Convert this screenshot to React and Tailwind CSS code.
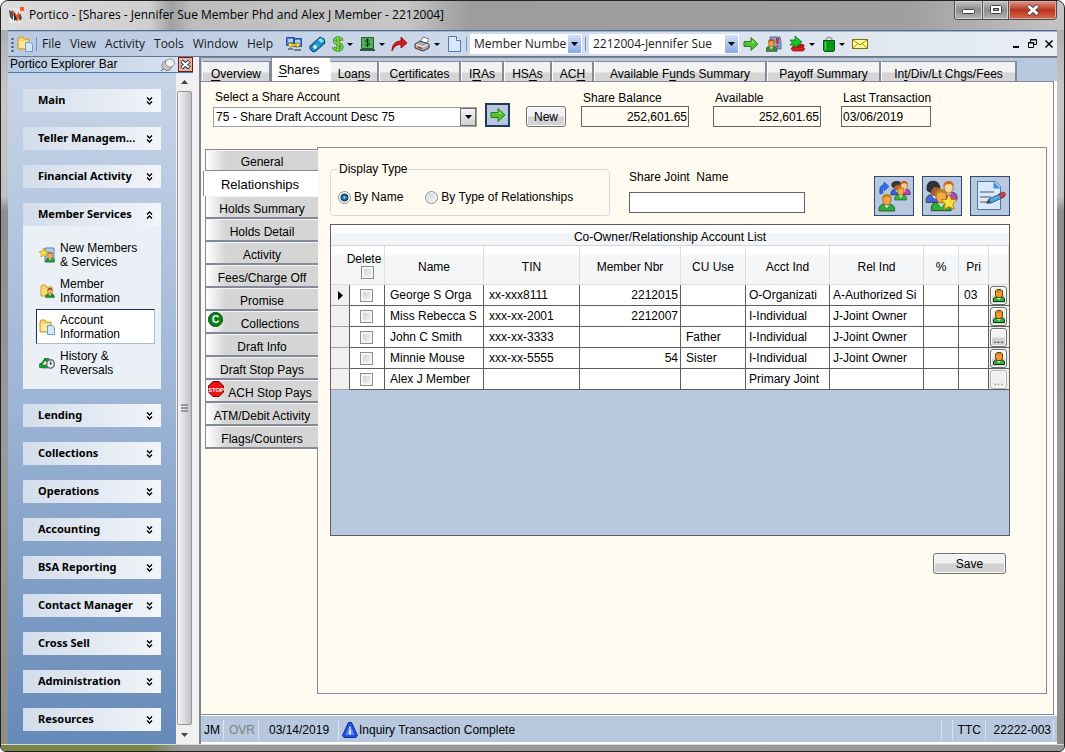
import { useState } from "react";

const MENUS = ["File", "View", "Activity", "Tools", "Window", "Help"];

const TABS = [
  { pre: "", key: "O", post: "verview", width: "w-[69px]" },
  { pre: "", key: "S", post: "hares", width: "w-[59px]" },
  { pre: "Loa", key: "n", post: "s", width: "w-[49px]" },
  { pre: "C", key: "e", post: "rtificates", width: "w-[82px]" },
  { pre: "I", key: "R", post: "As", width: "w-[43px]" },
  { pre: "HS", key: "A", post: "s", width: "w-[48px]" },
  { pre: "AC", key: "H", post: "", width: "w-[42px]" },
  { pre: "Available F", key: "u", post: "nds Summary", width: "w-[173px]" },
  { pre: "Pa", key: "y", post: "off Summary", width: "w-[114px]" },
  { pre: "In", key: "t", post: "/Div/Lt Chgs/Fees", width: "w-[136px]" },
];

const SIDE_TABS = [
  "General",
  "Relationships",
  "Holds Summary",
  "Holds Detail",
  "Activity",
  "Fees/Charge Off",
  "Promise",
  "Collections",
  "Draft Info",
  "Draft Stop Pays",
  "ACH Stop Pays",
  "ATM/Debit Activity",
  "Flags/Counters",
];

const GROUPS = [
  "Main",
  "Teller Managem...",
  "Financial Activity",
  "Member Services",
  "Lending",
  "Collections",
  "Operations",
  "Accounting",
  "BSA Reporting",
  "Contact Manager",
  "Cross Sell",
  "Administration",
  "Resources",
];

const SERVICES = [
  { lines: ["New Members", "& Services"], icon: NewMemberIcon },
  { lines: ["Member", "Information"], icon: MemberFolderIcon },
  { lines: ["Account", "Information"], icon: FolderIcon },
  { lines: ["History &", "Reversals"], icon: HistoryIcon },
];

const COLUMNS = [
  { label: "Name", width: "w-[99px]" },
  { label: "TIN", width: "w-[96px]" },
  { label: "Member Nbr", width: "w-[101px]" },
  { label: "CU Use", width: "w-[65px]" },
  { label: "Acct Ind", width: "w-[84px]" },
  { label: "Rel Ind", width: "w-[94px]" },
  { label: "%", width: "w-[35px]" },
  { label: "Pri", width: "w-[30px]" },
];

const ROWS = [
  { name: "George S Orga", tin: "xx-xxx8111", nbr: "2212015", use: "", acct: "O-Organizati", rel: "A-Authorized Si", pri: "03", action: "person" },
  { name: "Miss Rebecca S", tin: "xxx-xx-2001", nbr: "2212007", use: "", acct: "I-Individual", rel: "J-Joint Owner", pri: "", action: "person" },
  { name: "John C Smith", tin: "xxx-xx-3333", nbr: "", use: "Father", acct: "I-Individual", rel: "J-Joint Owner", pri: "", action: "more" },
  { name: "Minnie Mouse", tin: "xxx-xx-5555", nbr: "54", use: "Sister", acct: "I-Individual", rel: "J-Joint Owner", pri: "", action: "person" },
  { name: "Alex J Member", tin: "", nbr: "", use: "", acct: "Primary Joint", rel: "", pri: "", action: "disabled" },
];

export default function App() {
  return (
    <div className="flex min-h-screen flex-col overflow-hidden rounded-t-lg rounded-b-md border border-[#222] bg-[linear-gradient(to_bottom,#a3a3a3_0,#c9c6c6_12%,#c4c0c0_26%,#8d8d8d_28%,#9b9b9b_60%,#8f8d88_100%)] px-[7px] font-['Liberation_Sans',Arial,sans-serif] text-xs text-black">
      <TitleBar />
      <div className="flex flex-1 flex-col border-t border-[#5e6a78] bg-white">
        <Toolbar />
        <div className="flex flex-1">
          <ExplorerBar />
          <Workspace />
        </div>
      </div>
      <div className="-mx-[7px] h-[7px] border-t border-[#d8d8d8] bg-linear-to-r from-[#7c8548] from-14% to-[#98989a] to-17%" />
    </div>
  );
}

function TitleBar() {
  return (
    <header className="-mx-[7px] flex h-[29px] items-start bg-[linear-gradient(to_right,#dcdcdc_0,#cfcfcf_14%,#a0a0a0_16%,#bdbdbd_18%,#c6c6c6_38%,#9d9d9d_44%,#9f9f9f_85%,#c4c4c4_100%)] px-[7px]">
      <PorticoLogo />
      <h1 className="ml-1 flex-1 pt-[5px] font-['Open_Sans','Segoe_UI',sans-serif] text-xs leading-[17px] whitespace-nowrap">
        Portico - [Shares - Jennifer Sue Member Phd and Alex J Member - 2212004]
      </h1>
      <div className="flex h-[19px] overflow-hidden rounded-b border border-t-0 border-[#4d4d4d]">
        <button aria-label="Minimize" className="flex w-7 items-center justify-center border-r border-[#555] bg-linear-to-b from-[#c5c5c5] via-[#8c8c8c] to-[#b5b5b5] pt-1 inset-shadow-[0_0_0_1px_#d2d2d2]">
          <svg width="13" height="6"><rect x=".5" y=".5" width="12" height="4" rx="1" fill="#fff" stroke="#444" /></svg>
        </button>
        <button aria-label="Maximize" className="flex w-[26px] items-center justify-center border-r border-[#555] bg-linear-to-b from-[#c5c5c5] via-[#8c8c8c] to-[#b5b5b5] inset-shadow-[0_0_0_1px_#d2d2d2]">
          <svg width="12" height="10">
            <rect x=".5" y=".5" width="11" height="8" rx="1" fill="#fff" stroke="#444" />
            <rect x="3.5" y="3.5" width="5" height="2" fill="#999" stroke="#444" />
          </svg>
        </button>
        <button aria-label="Close" className="flex w-[47px] items-center justify-center bg-linear-to-b from-[#dd9a8b] via-[#b9311c] to-[#d4694f] inset-shadow-[0_0_0_1px_#e5a598]">
          <svg width="14" height="12" viewBox="0 0 14 12">
            <path d="M2 1.500l10 9M12 1.500l-10 9" stroke="#5c4a4a" strokeWidth="4.600" />
            <path d="M2.500 2l9 8M11.500 2l-9 8" stroke="#fff" strokeWidth="2.800" />
          </svg>
        </button>
      </div>
    </header>
  );
}

function Toolbar() {
  return (
    <div className="flex h-[26px] items-center border-t border-b border-t-[#8fb6e4] border-b-[#6c7582] bg-linear-to-r from-[#b9c9e1] to-[#e9eef4] font-['Open_Sans','Segoe_UI',sans-serif] text-[#1b1b1b]">
      <svg className="ml-[3px]" width="4" height="17"><path d="M1.5 2v15" stroke="#3d4f70" strokeWidth="2" strokeDasharray="2 2" /></svg>
      <span className="ml-0.5"><FolderIcon /></span>
      <Divider />
      <nav className="ml-0.5 flex w-[231px] justify-between">
        {MENUS.map((menu) => (
          <button key={menu} className="leading-4">{menu}</button>
        ))}
      </nav>
      <div className="ml-3 flex items-center gap-1.5">
        <IconButton label="Terminals"><TerminalsIcon /></IconButton>
        <IconButton label="Scanner"><ScannerIcon /></IconButton>
        <IconButton label="Cash" menu><DollarIcon /></IconButton>
        <IconButton label="Drawer" menu><DrawerIcon /></IconButton>
        <IconButton label="Forward"><RedArrowIcon /></IconButton>
        <IconButton label="Print" menu><PrinterIcon /></IconButton>
        <IconButton label="New page"><PageIcon /></IconButton>
      </div>
      <Divider />
      <ToolbarSelect label="Search by" value="Member Numbe" width="w-28" />
      <Divider />
      <ToolbarSelect label="Member" value="2212004-Jennifer Sue" width="w-[150px]" />
      <div className="ml-1 flex items-center gap-[7px]">
        <IconButton label="Go"><GreenArrow size={16} /></IconButton>
        <IconButton label="Alerts"><AlertPersonIcon /></IconButton>
        <IconButton label="Transfer" menu><TransferIcon /></IconButton>
        <IconButton label="Bag" menu><BagIcon /></IconButton>
        <IconButton label="Mail"><MailIcon /></IconButton>
      </div>
      <div className="mr-[3px] ml-auto flex items-center gap-1.5">
        <button aria-label="Minimize document">
          <svg width="10" height="10"><path d="M1 8h6" stroke="#000" strokeWidth="2" /></svg>
        </button>
        <button aria-label="Restore document">
          <svg width="10" height="10" fill="none" stroke="#000">
            <path d="M2.5 3V.5h6v5H6M2 1h7M.5 4h6" />
            <path d="M.5 3.5h5v5h-5z" />
          </svg>
        </button>
        <button aria-label="Close document">
          <svg width="10" height="10"><path d="M1.5 1.5l7 7M8.5 1.5l-7 7" stroke="#000" strokeWidth="1.5" /></svg>
        </button>
      </div>
    </div>
  );
}

function Divider() {
  return <span className="mx-[3px] h-3.5 w-px bg-[#6f93c8]" />;
}

function IconButton({ label, menu, children }) {
  return (
    <button aria-label={label} className="flex items-center gap-0.5">
      {children}
      {menu && <SmallCaret />}
    </button>
  );
}

function Caret() {
  return <svg width="7" height="4"><path d="M0 0h7L3.500 4z" fill="#000" /></svg>;
}

function SmallCaret() {
  return <svg width="7" height="3"><path d="M1 0h6L4 3z" fill="#000" /></svg>;
}

function ToolbarSelect({ label, value, width }) {
  return (
    <div className={`relative h-5 bg-white ${width}`}>
      <select aria-label={label} className="h-full w-full appearance-none pr-4 pl-1 leading-4">
        <option>{value}</option>
      </select>
      <span className="pointer-events-none absolute inset-y-px right-px flex w-[13px] items-center justify-center bg-linear-to-b from-[#d4e1f6] to-[#86aae4]">
        <Caret />
      </span>
    </div>
  );
}

function ExplorerBar() {
  return (
    <aside className="flex w-[185px] flex-col">
      <div className="flex h-4 items-center justify-between border-b border-[#4a78b5] bg-linear-to-r from-[#b5c8e0] to-[#dbe5f0] pl-0.5">
        <span className="leading-[15px]">Portico Explorer Bar</span>
        <span className="flex items-center gap-0.5">
          <button aria-label="Pin"><PinIcon /></button>
          <button aria-label="Close explorer" className="border border-[#6b1c1c] bg-[#e5b3aa] p-px">
            <svg width="11" height="11" viewBox="0 0 11 11">
              <path d="M1.500 2l8 7M9.500 2l-8 7" stroke="#333" strokeWidth="4" />
              <path d="M2 2.500l7 6M9 2.500l-7 6" stroke="#fff" strokeWidth="2" />
            </svg>
          </button>
        </span>
      </div>
      <div className="flex flex-1">
        <div className="flex flex-1 flex-col gap-[15px] bg-linear-to-b from-[#c8d5e8] via-[#9cb4d5] to-[#668ab8] px-[15px] pt-4">
          {GROUPS.map((group) => (
            <ExplorerGroup key={group} title={group} open={group === "Member Services"} />
          ))}
        </div>
        <div className="flex w-[17px] flex-col items-center bg-[#f0f0f0]">
          <button aria-label="Scroll up" className="flex h-[18px] items-center"><svg width="7" height="4"><path d="M0 4h7L3.500 0z" fill="#444" /></svg></button>
          <div className="flex w-[15px] flex-1 items-center justify-center rounded-xs border border-[#979797] bg-linear-to-r from-[#f5f5f5] via-[#dcdcdf] to-[#bfc0c4]">
            <svg width="7" height="8"><path d="M0 1h7M0 4h7M0 7h7" stroke="#555" /></svg>
          </div>
          <button aria-label="Scroll down" className="flex h-[19px] items-center"><svg width="7" height="4"><path d="M0 0h7L3.500 4z" fill="#444" /></svg></button>
        </div>
      </div>
    </aside>
  );
}

function ExplorerGroup({ title, open }) {
  return (
    <section>
      <button className="flex h-[23px] w-full items-center justify-between bg-linear-to-r from-[#d3ddeb] to-[#f2f5f9] pr-2 pl-[15px] font-['Noto_Sans',Tahoma,sans-serif] text-[11px] font-bold whitespace-nowrap">
        {title}
        <svg width="7" height="8" fill="none" stroke="#000" strokeWidth="1.400">
          <path d={open ? "M1 3.500l2.500-2.500 2.500 2.500M1 7.500l2.500-2.500 2.500 2.500" : "M1 .5l2.500 2.500 2.500-2.500M1 4.500l2.500 2.500 2.500-2.500"} />
        </svg>
      </button>
      {open && (
        <div className="flex flex-col gap-px bg-[#eaf0f5] pt-[11px] pr-1.5 pb-[9px] pl-[13px]">
          {SERVICES.map(({ lines, icon: Icon }) => (
            <a
              key={lines[0]}
              href="#"
              className={`flex h-[35px] items-center gap-[5px] border pl-0.5 leading-3.5 ${
                lines[0] === "Account" ? "border-t-[#1f2f4a] border-r-[#a9bcd6] border-b-[#a9bcd6] border-l-[#1f2f4a] bg-white" : "border-transparent"
              }`}
            >
              <Icon />
              <span>{lines[0]}<br />{lines[1]}</span>
            </a>
          ))}
        </div>
      )}
    </section>
  );
}

function Workspace() {
  return (
    <div className="flex min-w-0 flex-1 bg-[#f0f0f0] pl-[6px]">
      <main className="flex min-w-0 flex-1 flex-col border-t border-l-2 border-[#7e8694] bg-white pb-0.5">
        <div className="flex h-[23px] items-end bg-[#b8c9df] pl-px">
          {TABS.map((tab) => (
            <MainTab key={tab.post + tab.key} tab={tab} active={tab.key === "S"} />
          ))}
        </div>
        <div className="mr-[3px] flex flex-1 flex-col border border-l-0 border-[#848a9a] bg-[#fffbf0] pr-1.5 pb-5">
          <AccountRow />
          <div className="mt-5 flex flex-1 pl-0.5">
            <SideTabs />
            <Relationships />
          </div>
        </div>
        <StatusBar />
      </main>
    </div>
  );
}

function MainTab({ tab, active }) {
  return (
    <button
      className={`flex items-center justify-center whitespace-nowrap ${tab.width} ${
        active
          ? "h-[23px] border-l border-[#848a9a] bg-white pr-1 text-[13px]"
          : "h-5 border-t border-r-2 border-l border-t-[#848a9a] border-r-[#848a9a] border-l-white bg-linear-to-b from-[#f2f2f2] from-50% to-[#d5d5d5] to-60% pt-1"
      }`}
    >
      <span>{tab.pre}<u className="underline-offset-2">{tab.key}</u>{tab.post}</span>
    </button>
  );
}

const buttonStyle = "rounded-[3px] border border-[#707070] bg-linear-to-b from-[#f2f2f2] from-45% to-[#d2d2d2] to-55% inset-shadow-[0_0_0_1px_#fafafa]";

function AccountRow() {
  return (
    <div className="flex items-end pt-2 pl-3">
      <div className="w-[264px]">
        <label htmlFor="account" className="mb-0.5 ml-0.5 block leading-[15px]">Select a Share Account</label>
        <div className="relative h-5">
          <select id="account" className="h-full w-full appearance-none border border-[#a0a0a0] bg-white pl-0.5">
            <option>75 - Share Draft Account Desc 75</option>
          </select>
          <span className="pointer-events-none absolute inset-y-px right-px flex w-4 items-center justify-center border border-[#707070] bg-linear-to-b from-[#f5f5f5] to-[#cfcfcf]">
            <Caret />
          </span>
        </div>
      </div>
      <button aria-label="Open account" className="ml-2 flex h-6 w-[25px] items-center justify-center border-2 border-[#22395c] bg-[#b8c9df]">
        <GreenArrow size={16} />
      </button>
      <button className={`ml-4 h-[21px] w-10 pt-px ${buttonStyle}`}>New</button>
      <ReadOnlyField id="balance" label="Share Balance" value="252,601.65" className="ml-[15px] w-[108px]" align="text-right" />
      <ReadOnlyField id="available" label="Available" value="252,601.65" className="ml-6 w-[108px]" align="text-right" />
      <ReadOnlyField id="last" label="Last Transaction" value="03/06/2019" className="ml-5 w-[90px]" align="text-left" />
    </div>
  );
}

function ReadOnlyField({ id, label, value, className, align }) {
  return (
    <div className={className}>
      <label htmlFor={id} className="ml-0.5 block leading-[15px] whitespace-nowrap">{label}</label>
      <input id={id} readOnly value={value} className={`block h-[21px] w-full border border-[#646464] px-px ${align}`} />
    </div>
  );
}

function SideTabs() {
  return (
    <div className="flex w-[115px] flex-col pt-0.5">
      {SIDE_TABS.map((tab) => {
        if (tab === "Relationships") {
          return (
            <button key={tab} className="relative h-[25px] border-l border-[#848a9a] bg-white pt-0.5 pr-0.5 text-[13px]">
              {tab}
            </button>
          );
        }
        return (
          <button
            key={tab}
            className="relative ml-0.5 flex h-[23px] items-center justify-center border-b-2 border-l border-[#848a9a] bg-linear-to-r from-white to-[#d5d5d5] to-18% pt-1 whitespace-nowrap inset-shadow-[0_1px_0_#f4f4f4] first:h-[22px] first:border-t first:border-b"
          >
            {tab === "Collections" && <span className="absolute top-px left-0.5"><CollectionsBadge /></span>}
            {tab === "ACH Stop Pays" && <span className="absolute top-px left-0.5"><StopBadge /></span>}
            <span className={tab === "Collections" || tab === "ACH Stop Pays" ? "pl-4" : ""}>{tab}</span>
          </button>
        );
      })}
    </div>
  );
}

function Relationships() {
  const [display, setDisplay] = useState("name");

  return (
    <section className="-ml-px flex min-w-0 flex-1 flex-col border border-[#848a9a] pt-[14px] pr-9 pl-3">
      <div className="flex items-end">
        <fieldset className="h-[54px] w-[280px] rounded-sm border border-[#d0dae6] pl-[7px]">
          <legend className="px-px leading-[15px]">Display Type</legend>
          <div className="flex items-center pt-3">
            <Radio id="by-name" label="By Name" checked={display === "name"} onChange={() => setDisplay("name")} />
            <span className="w-[22px]" />
            <Radio id="by-type" label="By Type of Relationships" checked={display === "type"} onChange={() => setDisplay("type")} />
          </div>
        </fieldset>
        <div className="mb-[3px] ml-[19px] w-44">
          <label htmlFor="joint" className="mb-[7px] block leading-[15px] whitespace-pre">Share Joint  Name</label>
          <input id="joint" className="block h-[21px] w-full border border-[#646464] bg-white px-1" />
        </div>
        <div className="ml-auto flex gap-2">
          <ToolButton label="Change relationship"><SwapPeopleIcon /></ToolButton>
          <ToolButton label="Primary relationship"><StarPeopleIcon /></ToolButton>
          <ToolButton label="Edit notes"><EditNoteIcon /></ToolButton>
        </div>
      </div>
      <div className="mt-2 min-h-[312px] border border-[#5f5f5f] bg-[#b8c9df]">
        <OwnerTable />
      </div>
      <button className={`mt-[17px] mr-1 h-[21px] w-[73px] self-end pt-px ${buttonStyle}`}>Save</button>
    </section>
  );
}

function Radio({ id, label, checked, onChange }) {
  return (
    <span className="flex items-center gap-[3px]">
      <input
        id={id}
        type="radio"
        name="display"
        checked={checked}
        onChange={onChange}
        className={`h-[13px] w-[13px] appearance-none rounded-full border border-[#8e8f8f] inset-shadow-[0_0_0_1px_#f4f4f4] ${
          checked
            ? "bg-[radial-gradient(circle,#8fdcf8_0,#1b6f9d_28%,#0c3450_46%,#f4f4f4_56%)]"
            : "bg-linear-to-br from-[#cfd4da] to-[#f6f6f6]"
        }`}
      />
      <label htmlFor={id}>{label}</label>
    </span>
  );
}

function ToolButton({ label, children }) {
  return (
    <button aria-label={label} className="flex h-10 w-10 items-center justify-center border border-[#2f4a73] bg-[#b8c9df]">
      {children}
    </button>
  );
}

function Check({ label }) {
  return (
    <input
      type="checkbox"
      aria-label={label}
      className="block h-[13px] w-[13px] appearance-none border border-[#8e8f8f] bg-linear-to-br from-[#c9ced5] to-[#f6f6f6] inset-shadow-[0_0_0_2px_#f4f4f4] checked:bg-none checked:bg-[#1b6f9d]"
    />
  );
}

function OwnerTable() {
  const head = "border-r border-b border-[#dcdfe3] bg-linear-to-b from-white from-22% to-[#f4f6f8] to-26% p-0 font-normal";
  const cell = "overflow-hidden border-r border-b border-[#5f5f5f] bg-white p-0 whitespace-nowrap";

  return (
    <table className="w-full table-fixed border-separate border-spacing-0">
      <caption className="h-[21px] border-b border-[#d5d8dc] bg-linear-to-b from-white from-35% to-[#f2f4f6] to-45% pt-1 leading-4">
        Co-Owner/Relationship Account List
      </caption>
      <thead>
        <tr className="h-[39px]">
          <th className={`w-[19px] border-r-0! ${head}`} />
          <th className={`w-[35px] ${head}`}>
            <span className="-ml-1.5 flex flex-col items-center leading-3.5">
              Delete
              <span className="pl-1.5"><Check label="Delete all" /></span>
            </span>
          </th>
          {COLUMNS.map((column) => (
            <th key={column.label} className={`${column.width} ${head} pt-[3px]!`}>{column.label}</th>
          ))}
          <th className={`w-5 ${head}`} />
        </tr>
      </thead>
      <tbody>
        {ROWS.map((row, index) => (
          <tr key={row.name} className="h-[21px]">
            <td className="border-r border-b border-[#5f5f5f] border-b-[#a0a0a0] bg-[#f0f0f0] p-0">
              {index === 0 && <svg className="ml-1.5" width="6" height="9"><path d="M1 0v9l5-4.500z" fill="#000" /></svg>}
            </td>
            <td className={cell}><span className="flex justify-center pr-0.5"><Check label={`Delete ${row.name}`} /></span></td>
            <td className={`${cell} pl-[5px]!`}>{row.name}</td>
            <td className={`${cell} pl-[5px]!`}>{row.tin}</td>
            <td className={`${cell} pr-0.5! text-right`}>{row.nbr}</td>
            <td className={`${cell} pl-[5px]!`}>{row.use}</td>
            <td className={`${cell} pl-[3px]!`}>{row.acct}</td>
            <td className={`${cell} pl-[3px]!`}>{row.rel}</td>
            <td className={cell} />
            <td className={`${cell} pl-[5px]!`}>{row.pri}</td>
            <td className={`${cell} border-r-0! bg-[#f0f0f0]!`}>
              <button
                aria-label={`Details of ${row.name}`}
                disabled={row.action === "disabled"}
                className={`ml-px flex h-[19px] w-[17px] items-center justify-center leading-3 disabled:border-[#b5b5b5] disabled:bg-none disabled:text-[#888] ${buttonStyle}`}
              >
                {row.action === "person" ? <PersonIcon /> : <span className="pt-1">...</span>}
              </button>
            </td>
          </tr>
        ))}
      </tbody>
    </table>
  );
}

function StatusBar() {
  return (
    <footer className="mt-px flex h-[26px] items-center bg-[#b8c9df] pt-0.5 leading-4">
      <span className="w-[23px] border-r border-[#dfe3e8] pl-[3px] leading-5">JM</span>
      <span className="w-[35px] border-r border-[#dfe3e8] pl-[5px] leading-5 text-[#808080]">OVR</span>
      <span className="w-20 border-r border-[#dfe3e8] pl-2.5 leading-5">03/14/2019</span>
      <span className="ml-[3px] flex flex-1 items-center gap-px"><InfoIcon />Inquiry Transaction Complete</span>
      <span className="h-5 w-3 border-x border-[#dfe3e8]" />
      <span className="w-[33px] border-r border-[#dfe3e8] pl-[5px] leading-5">TTC</span>
      <span className="mr-[3px] border-r border-[#dfe3e8] pr-0.5 pl-2 leading-5">22222-003</span>
    </footer>
  );
}

/* icons */

function Bust({ x = 0, y = 0, scale = 1, hair = "#c8701c", skin = "#f5b060", body = "#2f9c32" }) {
  return (
    <g transform={`translate(${x} ${y}) scale(${scale})`}>
      <path d="M1 15.500c-.6-4 1.500-6 3.500-6h7c2 0 4 2 3.500 6z" fill={body} stroke="#1c4a24" strokeWidth=".7" />
      <path d="M5.500 9.500L8 13l2.500-3.500z" fill="#d9f0d0" />
      <ellipse cx="8" cy="5.500" rx="3.800" ry="4.600" fill={skin} stroke="#8a4a12" strokeWidth=".6" />
      <path d="M3.800 5C3.500 1.500 5.500 0 8 0s4.800 1.500 4.200 5c-.8-2-2-2.500-4.200-2.500S4.500 3.500 3.800 5z" fill={hair} />
    </g>
  );
}

function Star({ x, y, scale = 1 }) {
  return (
    <path
      transform={`translate(${x} ${y}) scale(${scale})`}
      d="M8 0l2.300 5.400 5.700.5-4.300 3.900 1.300 5.700L8 12.500 3 15.500l1.300-5.700L0 5.900l5.700-.5z"
      fill="#ffdf3d"
      stroke="#b48708"
    />
  );
}

function PorticoLogo() {
  return (
    <svg className="mt-[6px]" width="17" height="17" viewBox="0 0 17 17">
      <path d="M1 1h12v15H1z" fill="#e6e6e6" />
      <path d="M1 3l4 2v8l-3-3zM12 6l2 5-2 3-2-4z" fill="#4a4f54" />
      <path d="M4 2l5 6 2-4v7l-2 4-4-7z" fill="#ef5a18" />
      <path d="M6 5l3 7-3 2z" fill="#2d2d2d" />
      <path d="M12 0h4v4h-4z" fill="#ff5a0a" />
    </svg>
  );
}

function FolderIcon() {
  return (
    <svg className="shrink-0" width="16" height="16" viewBox="0 0 16 16">
      <path d="M1 3l1-2h4l1 2h5v10H1z" fill="#f5d56a" stroke="#c99a2c" />
      <path d="M2 5h9v7H2z" fill="#fbe9a0" />
      <path d="M8.500 6.500h5l2 2v7h-7z" fill="#d3e7fa" stroke="#6f9cc8" />
    </svg>
  );
}

function MemberFolderIcon() {
  return (
    <svg className="shrink-0" width="16" height="16" viewBox="0 0 16 16">
      <path d="M2 4l1-2h3l1 2h6v9H2z" fill="#f8dc72" stroke="#c99a2c" />
      <Bust x={6} y={5} scale={0.62} body="#189020" hair="#7b4516" />
    </svg>
  );
}

function NewMemberIcon() {
  return (
    <svg className="shrink-0" width="16" height="16" viewBox="0 0 16 16">
      <path d="M6 1h9v14H6z" fill="#a9cdf2" stroke="#5d86b4" />
      <Bust x={6} y={5} scale={0.64} hair="#b7601a" />
      <Star x={0} y={1} scale={0.58} />
    </svg>
  );
}

function HistoryIcon() {
  return (
    <svg className="shrink-0" width="16" height="16" viewBox="0 0 16 16">
      <path d="M1.500 10.500L6 4.500l4 3" fill="none" stroke="#128a28" strokeWidth="2" />
      <path d="M5 3.500h5v4zM0 12l1-4 2 2h6v3H3z" fill="#18a032" stroke="#0b5a1a" strokeWidth=".6" />
      <ellipse cx="11.500" cy="9" rx="3.800" ry="4.300" fill="#e3e8ec" stroke="#687178" strokeWidth="1.400" />
      <path d="M11.500 6.500v3l1.500-1.500" fill="none" stroke="#444" />
    </svg>
  );
}

function TerminalsIcon() {
  return (
    <svg width="18" height="16" viewBox="0 0 18 16">
      <path d="M1.500 1.500h8v8h-8zM8.500 2.500h8v8h-8z" fill="#4c86dc" stroke="#2b4f94" />
      <path d="M3 3h5v3H3zM10 4h5v3h-5z" fill="#a9d2fa" />
      <path d="M3 12h5v2H3zM9 13h7v2H9z" fill="#6f7e96" />
      <path d="M3 9l3-3v2h6V6l3 3-3 3v-2H6v2z" fill="#ffe23a" stroke="#a07c08" strokeWidth=".6" />
    </svg>
  );
}

function ScannerIcon() {
  return (
    <svg width="17" height="17" viewBox="0 0 17 17">
      <path d="M1 10l8-7 2-2 4 2 1 4-9 8-3 1-3-3z" fill="#1c8cc0" stroke="#0a3f66" />
      <path d="M9 4l3-2 3 3-3 2z" fill="#8be0fa" />
      <path d="M3 11l5-5 3 3-5 5z" fill="#2fa3d6" />
      <circle cx="6" cy="11" r="1.700" fill="#fff" />
    </svg>
  );
}

function DollarIcon() {
  return (
    <svg width="12" height="16" viewBox="0 0 12 16" fill="none">
      <path d="M10 5c-.5-4-8-3.500-7.500 0S10 7 10 11s-8 3.500-8.500 0M6 0v16" stroke="#2a6d14" strokeWidth="3" />
      <path d="M10 5c-.5-4-8-3.500-7.500 0S10 7 10 11s-8 3.500-8.500 0M6 0v16" stroke="#76d83c" strokeWidth="1.800" />
    </svg>
  );
}

function DrawerIcon() {
  return (
    <svg width="17" height="16" viewBox="0 0 17 16">
      <path d="M2.500 1.500h12v11h-12z" fill="#52b258" stroke="#275e2a" />
      <path d="M1 13h15v2H1z" fill="#35553a" />
      <path d="M10.500 5c-.5-2-4-1.500-4 0s4 1 4 3-4 2-4.500 0M8.500 2.500v8.500" fill="none" stroke="#0c2c0d" />
    </svg>
  );
}

function RedArrowIcon() {
  return (
    <svg width="17" height="16" viewBox="0 0 17 16">
      <path d="M1 15C1 8 5 5 10 5V1l6 6-6 5V8.500C6 8.500 3 10 1 15z" fill="#dc1818" stroke="#7c0a0a" strokeWidth=".8" />
    </svg>
  );
}

function PrinterIcon() {
  return (
    <svg width="17" height="16" viewBox="0 0 17 16">
      <path d="M6 6l3-5 6 2-3 5z" fill="#fff" stroke="#777" />
      <path d="M1 8l5-3 9 3v4l-6 3-8-3z" fill="#a8abae" stroke="#3a3a3a" />
      <path d="M2 8.500l7 2.500 5.500-3" fill="none" stroke="#fff" />
      <path d="M4 11l4 1.500" stroke="#d22" strokeWidth="1.500" />
    </svg>
  );
}

function PageIcon() {
  return (
    <svg className="mx-0.5" width="13" height="16" viewBox="0 0 13 16">
      <path d="M.5.5h8l4 4v11H.5z" fill="#d7e8fb" stroke="#4e78b8" />
      <path d="M8.500.5v4h4" fill="#fff" stroke="#4e78b8" />
    </svg>
  );
}

function GreenArrow({ size }) {
  return (
    <svg width={size} height={size} viewBox="0 0 16 16">
      <path d="M1 5.500h7V1.500L15 8l-7 6.500v-4H1z" fill="#4fc42c" stroke="#2f7a1e" />
      <path d="M2 6.500h7V4l3 3z" fill="#9be87a" />
    </svg>
  );
}

function AlertPersonIcon() {
  return (
    <svg width="16" height="16" viewBox="0 0 16 16">
      <path d="M4 1h10l1 5v7H5z" fill="#7fa9da" stroke="#4a6ea2" />
      <path d="M10 2h3l-.5 6h-2zM10.500 9.500h2v2h-2z" fill="#d92020" />
      <Bust x={-1} y={3} scale={0.8} hair="#a8561a" skin="#f09a3c" body="#3c8a3c" />
    </svg>
  );
}

function TransferIcon() {
  return (
    <svg width="17" height="16" viewBox="0 0 17 16">
      <path d="M4 10h9l3 3-2 2H4L2 13z" fill="#d81e1e" stroke="#7a0a0a" strokeWidth=".7" />
      <path d="M8 8h6l2 2-3 2H8z" fill="#b31515" />
      <path d="M1 4h5V0l7 6-7 6V9H1l2-2.500z" fill="#14c828" stroke="#0b6c16" strokeWidth=".8" />
    </svg>
  );
}

function BagIcon() {
  return (
    <svg width="14" height="16" viewBox="0 0 14 16">
      <path d="M4 5c0-5 6-5 6 0" fill="none" stroke="#9aa29a" strokeWidth="1.600" />
      <path d="M1.500 4.500h11v10l-1 1h-9l-1-1z" fill="#0c9418" stroke="#065c0e" />
      <path d="M3.500 6v8" stroke="#4fd25a" strokeWidth="1.500" />
    </svg>
  );
}

function MailIcon() {
  return (
    <svg width="16" height="12" viewBox="0 0 16 12">
      <path d="M.5 1.500h15v9H.5z" fill="#fff9a0" stroke="#7c6e00" />
      <path d="M1 2l7 5 7-5M1 10l5-4.500M15 10l-5-4.500" fill="none" stroke="#a89400" />
    </svg>
  );
}

function PinIcon() {
  return (
    <svg width="16" height="14" viewBox="0 0 16 14">
      <path d="M1 13l5-5" stroke="#555" />
      <ellipse cx="7" cy="7.500" rx="5" ry="5" fill="#c4c6c8" stroke="#808488" />
      <ellipse cx="10" cy="5" rx="4.500" ry="4" fill="#f2f3f4" stroke="#8d9194" />
    </svg>
  );
}

function CollectionsBadge() {
  return (
    <svg width="15" height="15" viewBox="0 0 15 15">
      <circle cx="7.500" cy="7.500" r="7" fill="#0b7f1a" stroke="#06500f" />
      <text x="7.500" y="11" textAnchor="middle" fontSize="10" fontWeight="bold" fill="#fff">C</text>
    </svg>
  );
}

function StopBadge() {
  return (
    <svg width="16" height="16" viewBox="0 0 16 16">
      <path d="M5 .5h6L15.500 5v6L11 15.500H5L.5 11V5z" fill="#f01010" stroke="#5c0000" />
      <text x="8" y="10.500" textAnchor="middle" fontSize="6" fontWeight="bold" fill="#fff">STOP</text>
    </svg>
  );
}

function PersonIcon() {
  return (
    <svg width="12" height="13" viewBox="0 0 12 13">
      <path d="M.5 12.500v-3L2.500 8h7l2 1.500v3z" fill="#2fae3c" stroke="#123c16" />
      <path d="M2.500 2L4 .5h4L9.500 2v4L8 8.500H4L2.500 6z" fill="#f79a24" stroke="#6b3d0c" />
      <path d="M3.500 1.200h5V3h-5z" fill="#b8862c" />
      <path d="M4 9h4l-2 2z" fill="#bdf0b8" />
    </svg>
  );
}

function InfoIcon() {
  return (
    <svg width="16" height="16" viewBox="0 0 16 16">
      <path d="M6.500.5h3l6 13-1.500 2H2l-1.500-2z" fill="#2350dc" stroke="#0f2c96" />
      <path d="M8 3l4.500 10h-9z" fill="#5d8cf4" />
      <path d="M8 7.500v5M8 5v1.500" stroke="#fff" strokeWidth="1.500" />
    </svg>
  );
}

function SwapPeopleIcon() {
  return (
    <svg width="34" height="34" viewBox="0 0 34 34">
      <Bust x={13} y={2} scale={0.9} hair="#33373c" skin="#c0622a" body="#3a5ae0" />
      <Bust x={20} y={2} scale={0.88} hair="#c8541a" skin="#f7c890" body="#c03cc0" />
      <path d="M15 8c-2-4 1-6 5-6 3 0 4 2 3 4-3-1-5 0-6 3z" fill="#33373c" />
      <Bust x={17} y={8} scale={0.84} hair="#c8861e" skin="#f5a850" body="#35b23c" />
      <Bust x={1} y={15} scale={1.1} hair="#c08018" skin="#f5a445" body="#2eac36" />
      <path d="M3 15c-1-7 1-9 4-9V3l5 4.500L7 12V9c-1.500 0-2 2-1 5z" fill="#2f6cf0" stroke="#1b48b8" strokeWidth=".7" />
    </svg>
  );
}

function StarPeopleIcon() {
  return (
    <svg width="34" height="34" viewBox="0 0 34 34">
      <Bust x={0} y={4} scale={1.25} hair="#2f3338" skin="#b0602c" body="#4a62e0" />
      <path d="M2 12C0 4 5 1 10 2c4 1 5 4 4 7-4-2-7-1-8 5z" fill="#2f3338" />
      <Bust x={14} y={2} scale={1.2} hair="#d06a24" skin="#f9d8a0" body="#c23cc0" />
      <Bust x={5} y={10} scale={1.4} hair="#b88420" skin="#efaa50" body="#34ac3c" />
      <Star x={16} y={15} scale={1} />
    </svg>
  );
}

function EditNoteIcon() {
  return (
    <svg width="34" height="34" viewBox="0 0 34 34">
      <path d="M4.500 2.500h18l5 5v23h-23z" fill="#d9eafc" stroke="#4c74ac" />
      <path d="M20.500 2.500l7 7h-7z" fill="#3d8ce8" />
      <path d="M7 13h14M7 18h11M7 23h8" stroke="#7c8894" strokeWidth="1.500" />
      <path d="M14 24l2-4 13-6 2 4-13 6z" fill="#58a8e0" stroke="#2a5a8c" />
      <path d="M13 24.500l3-4.500 2 4z" fill="#3a4a5c" />
      <path d="M26 15l4-2c2 0 3 2 2 4l-4 2z" fill="#d83a3a" stroke="#7c2020" strokeWidth=".6" />
    </svg>
  );
}
